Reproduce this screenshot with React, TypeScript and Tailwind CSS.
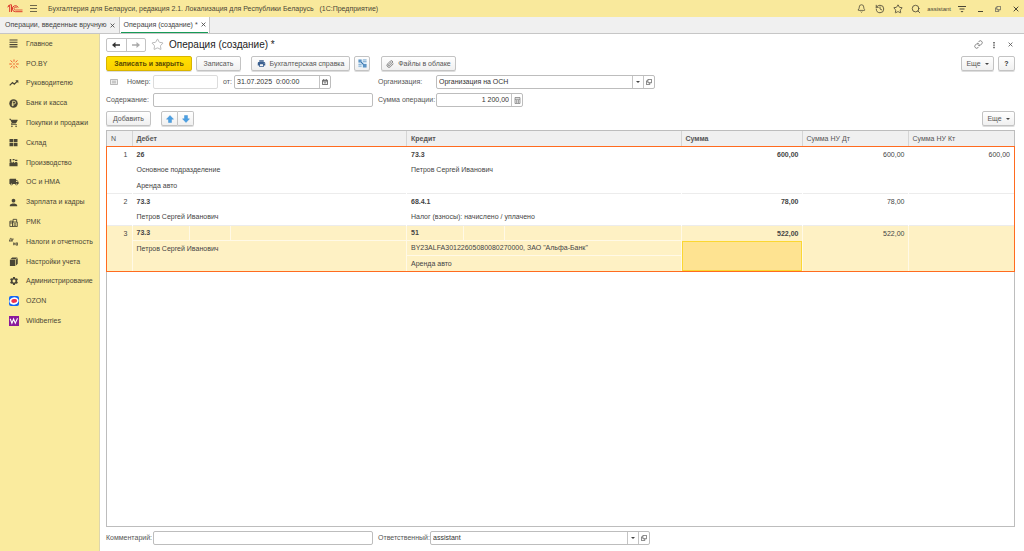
import type { ReactNode } from "react";
import clsx from "clsx";
import { Bell, History, Link, Paperclip, Search, Star } from "lucide-react";
import {
  MdLocalShipping,
  MdPerson,
  MdPrint,
  MdSettings,
  MdShoppingCart,
} from "react-icons/md";

const MenuIcon = () => (
  <svg viewBox="0 0 9 9" className="size-[9px]" stroke="currentColor" strokeWidth=".8">
    <path d="M1 1.500h7M1 4.500h7M1 7.500h7" />
  </svg>
);

const ListIcon = () => (
  <svg viewBox="0 0 9 9" className="size-[9px]" stroke="currentColor">
    <path d="M.5 1h8M.5 3.3h8M.5 5.6h8M.5 7.9h8" strokeWidth="1.1" />
  </svg>
);

const SparkIcon = () => (
  <svg viewBox="0 0 10 10" className="size-[10px]" stroke="#ee5a24" strokeWidth="1">
    <path d="M5 .5v2.200M5 7.300v2.200M1.500 1.500l2 1.700M8.500 1.500l-2 1.700M.3 5h2.500M7.200 5h2.500M1.500 8.500l2-1.700M8.500 8.500l-2-1.700" />
    <circle cx="5" cy="5" r=".8" fill="#ee5a24" stroke="none" />
  </svg>
);

const TrendIcon = () => (
  <svg viewBox="0 0 10 10" className="size-[10px]" fill="none" stroke="currentColor" strokeWidth="1.2">
    <path d="M.7 7.300L3.500 4.500l1.800 1.700L8.500 3" />
    <path d="M6.300 2.300h3v3z" fill="currentColor" stroke="none" />
  </svg>
);

const RubleIcon = () => (
  <svg viewBox="0 0 10 10" className="size-[9px]">
    <circle cx="5" cy="5" r="4.700" fill="currentColor" />
    <path
      d="M4 8V2.500h1.800a1.500 1.500 0 0 1 0 3H3M3 6.800h2.500"
      fill="none"
      stroke="#faeb9e"
      strokeWidth=".9"
    />
  </svg>
);

const WarehouseIcon = () => (
  <svg viewBox="0 0 9 9" className="size-[9px]" fill="currentColor">
    <path d="M.5 1h3.700v3.300H.5zM4.800 1h3.700v3.300H4.800zM.5 4.900h3.700v3.300H.5zM4.800 4.900h3.700v3.300H4.800z" />
  </svg>
);

const FactoryIcon = () => (
  <svg viewBox="0 0 10 10" className="size-[9px]" fill="currentColor">
    <path d="M.5 9.300V5.500L3 3.800v1.700l2.500-1.700v1.700L8 4.200l1.500 1v4.100zM.8 1h1.700v3L.8 5zM4 1.200h2.200v1.300H4zM6.700 2h2.600v1.200H6.700z" />
  </svg>
);

const CashDeskIcon = () => (
  <svg viewBox="0 0 10 10" className="size-[9px]" fill="none" stroke="currentColor">
    <path d="M1 3.500h3v6H1zM4 4.500h5.200v5H4zM4.500 4.500v-3h4v3M5.500 6.500h2.500M5.500 8h2.500M1 5.500h3" />
  </svg>
);

const TaxIcon = () => (
  <svg viewBox="0 0 10 10" className="size-[9px]" fill="none" stroke="currentColor" strokeWidth=".9">
    <path d="M.5 4.500l1-3h1v3M0 4.500h3.200M3.700 2v3M3.700 2.300h1.600M5.200 6v3.200M5.200 7.600h1.500M6.700 6.300v2.700M8 6.500h1.500v2.600H8z" />
  </svg>
);

const BoxIcon = () => (
  <svg viewBox="0 0 10 10" className="size-[9px]" fill="currentColor">
    <path d="M1 3h6v7H1zM1.500 2.500L3.500.500H9.500L7.500 2.500zM7.700 3L9.700 1v6.500L7.700 9.500z" />
  </svg>
);

const OzonIcon = () => (
  <svg viewBox="0 0 10 10" className="size-[10px]">
    <rect width="10" height="10" rx="2" fill="#1264f5" />
    <ellipse cx="5" cy="5" rx="4.600" ry="3.700" fill="#fff" transform="rotate(-15 5 5)" />
    <ellipse cx="5.200" cy="5" rx="2.900" ry="1.900" fill="#f0304f" transform="rotate(-10 5 5)" />
  </svg>
);

const WildberriesIcon = () => (
  <svg viewBox="0 0 10 10" className="size-[10px]">
    <rect width="10" height="10" fill="#8a1a9b" />
    <path d="M1.200 2.800l1.700 4.400 1.700-4.200 1.700 4.200 2.200-5" fill="none" stroke="#fff" strokeWidth="1.100" />
  </svg>
);

const Logo = () => (
  <svg viewBox="0 0 16 9" className="h-[9px] w-4" fill="none" stroke="#dc3a2c" strokeWidth="1">
    <path d="M.5 3L2.700 1.500V8M4.500 8V.8H3.200L1 2.200" />
    <path d="M11.200 3.700A3 3 0 1 0 8.500 7.700H15.500" />
    <path d="M9.800 4.200A1.400 1.400 0 1 0 8.500 6H15.500" strokeWidth=".8" />
  </svg>
);

const OpenIcon = () => (
  <svg viewBox="0 0 8 8" className="size-[6px]" fill="none" stroke="#555">
    <path d="M2.500.5h5v4.500h-5zM2.500 2.500h-2v5h4.500V5" />
  </svg>
);

const CaretIcon = () => (
  <svg viewBox="0 0 4 2" className="h-[2px] w-1" fill="#444">
    <path d="M0 0h4L2 2z" />
  </svg>
);

const CalendarIcon = () => (
  <svg viewBox="0 0 7 7" className="size-[6px]" fill="none" stroke="#444">
    <path d="M.5 1.500h6v5h-6zM1 2.500h5M2 0v1.500M5 0v1.500M2 4.500h3" strokeWidth=".9" />
  </svg>
);

const CalculatorIcon = () => (
  <svg viewBox="0 0 7 7" className="size-[7px]" fill="#eee" stroke="#777" strokeWidth=".7">
    <path d="M1 .5h5v6H1zM1 2.300h5M2.700 3v3M4.400 3v3" />
  </svg>
);

const PostingsIcon = () => (
  <svg viewBox="0 0 10 10" className="size-[9px]" fill="none">
    <path d="M.5.500h9v9h-9z" fill="#dcecf8" />
    <path d="M.5.500h3.500v3.500H.5zM5.500 5.500h4v4h-4z" fill="#5b93c4" />
    <path d="M5.500 1h4M5.500 3h4M.5 6h3.500M.5 8h3.500" stroke="#7ba7cc" />
    <path d="M3.500 3.500L6 6" stroke="#2f6da8" strokeWidth="1.2" />
  </svg>
);

const CloseIcon = ({ className }: { className?: string }) => (
  <svg viewBox="0 0 6 6" className={clsx("shrink-0", className)} stroke="currentColor">
    <path d="M.7.700l4.600 4.600M5.300.700L.7 5.300" />
  </svg>
);

const ArrowIcon = ({ className }: { className?: string }) => (
  <svg viewBox="0 0 8 8" className={clsx("size-[8px]", className)} fill="currentColor">
    <path d="M0 4L3.500 1v2.200H8v1.600H3.500V7z" />
  </svg>
);

const BlueArrowIcon = ({ className }: { className?: string }) => (
  <svg viewBox="0 0 8 8" className={clsx("size-[8px]", className)} fill="#4a9fe3" stroke="#2f85cc" strokeWidth=".4">
    <path d="M4 .500l3.500 3.700H5.500v3.300h-3V4.200H.500z" />
  </svg>
);

const sections: { title: string; icon: ReactNode }[] = [
  { title: "Главное", icon: <ListIcon /> },
  { title: "PO.BY", icon: <SparkIcon /> },
  { title: "Руководителю", icon: <TrendIcon /> },
  { title: "Банк и касса", icon: <RubleIcon /> },
  { title: "Покупки и продажи", icon: <MdShoppingCart size={10} /> },
  { title: "Склад", icon: <WarehouseIcon /> },
  { title: "Производство", icon: <FactoryIcon /> },
  { title: "ОС и НМА", icon: <MdLocalShipping size={10} /> },
  { title: "Зарплата и кадры", icon: <MdPerson size={11} /> },
  { title: "РМК", icon: <CashDeskIcon /> },
  { title: "Налоги и отчетность", icon: <TaxIcon /> },
  { title: "Настройки учета", icon: <BoxIcon /> },
  { title: "Администрирование", icon: <MdSettings size={10} /> },
  { title: "OZON", icon: <OzonIcon /> },
  { title: "Wildberries", icon: <WildberriesIcon /> },
];

const entries = [
  {
    debit: ["26", "Основное подразделение", "Аренда авто"],
    credit: ["73.3", "Петров Сергей Иванович"],
    sum: "600,00",
    taxDebit: "600,00",
    taxCredit: "600,00",
  },
  {
    debit: ["73.3", "Петров Сергей Иванович"],
    credit: ["68.4.1", "Налог (взносы): начислено / уплачено"],
    sum: "78,00",
    taxDebit: "78,00",
    taxCredit: "",
  },
  {
    debit: ["73.3", "Петров Сергей Иванович"],
    credit: ["51", 'BY23ALFA30122605080080270000, ЗАО "Альфа-Банк"', "Аренда авто"],
    sum: "522,00",
    taxDebit: "522,00",
    taxCredit: "",
  },
];

function Button({
  children,
  className,
  label,
}: {
  children: ReactNode;
  className?: string;
  label?: string;
}) {
  return (
    <button
      type="button"
      aria-label={label}
      className={clsx(
        "flex h-[15px] shrink-0 items-center justify-center rounded-[2px] border border-[#c3c3c3] bg-linear-to-b from-white to-[#f0f0f0] shadow-[0_1px_0_#ddd]",
        className
      )}
    >
      {children}
    </button>
  );
}

function Field({
  id,
  value = "",
  className,
  inputClassName,
  children,
}: {
  id: string;
  value?: string;
  className?: string;
  inputClassName?: string;
  children?: ReactNode;
}) {
  return (
    <div
      className={clsx(
        "flex h-[14px] shrink-0 overflow-hidden rounded-[2px] border border-[#bdbdbd] bg-white",
        className
      )}
    >
      <input
        id={id}
        defaultValue={value}
        className={clsx("min-w-0 flex-1 bg-transparent px-0.5 text-[#333] outline-none", inputClassName)}
      />
      {children}
    </div>
  );
}

function FieldButton({ label, children }: { label: string; children: ReactNode }) {
  return (
    <button
      type="button"
      aria-label={label}
      className="flex w-[11px] shrink-0 items-center justify-center border-l border-[#c4c4c4]"
    >
      {children}
    </button>
  );
}

function AccountCell({ lines, selected }: { lines: string[]; selected: boolean }) {
  return (
    <div>
      {lines.map((line, i) => (
        <div
          key={i}
          className={clsx(
            "flex items-center pl-1",
            i === 1 && !selected ? "h-4" : "h-[15px]",
            i === 0 && "font-bold",
            selected && i < lines.length - 1 && "border-b border-[#fff9e6]"
          )}
        >
          {selected && i === 0 ? (
            <>
              <span className="w-[52px]">{line}</span>
              <span className="h-full w-[42px] border-x border-[#fff9e6]" />
            </>
          ) : (
            line
          )}
        </div>
      ))}
    </div>
  );
}

function Header() {
  return (
    <header className="flex h-[17px] shrink-0 items-center bg-[#f9e99c] pr-[5px] pl-[7px] text-[#4a4636]">
      <Logo />
      <button type="button" aria-label="Меню" className="ml-[6px]">
        <MenuIcon />
      </button>
      <span className="ml-[10px] whitespace-pre">
        {"Бухгалтерия для Беларуси, редакция 2.1. Локализация для Республики Беларусь   (1С:Предприятие)"}
      </span>
      <div className="ml-auto flex items-center">
        <button type="button" aria-label="Уведомления">
          <Bell size={9} />
        </button>
        <button type="button" aria-label="История" className="ml-[9px]">
          <History size={10} />
        </button>
        <button type="button" aria-label="Избранное" className="ml-2">
          <Star size={10} />
        </button>
        <button type="button" aria-label="Поиск" className="ml-2">
          <Search size={10} />
        </button>
        <span className="ml-[6px] text-[6px]">assistant</span>
        <button type="button" aria-label="Настройки" className="ml-[7px]">
          <svg viewBox="0 0 8 8" className="size-[8px]" stroke="currentColor">
            <path d="M0 1.500h8M1.500 4h5" />
            <path d="M2.500 6h3L4 7.500z" fill="currentColor" stroke="none" />
          </svg>
        </button>
        <button type="button" aria-label="Свернуть" className="ml-[12px]">
          <svg viewBox="0 0 5 8" className="h-[8px] w-[5px]" stroke="currentColor">
            <path d="M0 6.500h5" />
          </svg>
        </button>
        <button type="button" aria-label="Развернуть" className="ml-[12px]">
          <OpenIcon />
        </button>
        <button type="button" aria-label="Закрыть" className="ml-[12px]">
          <CloseIcon className="size-[6px]" />
        </button>
      </div>
    </header>
  );
}

function Tabs() {
  return (
    <nav className="flex h-[17px] shrink-0 border-b border-[#c6c6c6] bg-[#f0f0f0] text-[#444]">
      <div className="flex items-center gap-[3px] border-r border-[#c6c6c6] pr-[4px] pl-[5px]">
        <a href="#operations">Операции, введенные вручную</a>
        <button type="button" aria-label="Закрыть вкладку">
          <CloseIcon className="size-[5px]" />
        </button>
      </div>
      <div className="flex border-r border-[#c6c6c6] bg-white px-px">
        <div className="flex items-center gap-[3px] border-b border-[#169b57] pr-[2px] pl-[3px]">
          <a href="#operation">Операция (создание) *</a>
          <button type="button" aria-label="Закрыть вкладку">
            <CloseIcon className="size-[5px]" />
          </button>
        </div>
      </div>
    </nav>
  );
}

function Sidebar() {
  return (
    <aside className="w-[100px] shrink-0 border-r border-[#ddd6ad] bg-[#faeb9e] text-[#4a4636]">
      <ul className="flex h-[297px] flex-col">
        {sections.map(({ title, icon }) => (
          <li key={title} className="flex flex-1 items-center">
            <a href="#section" className="flex items-center whitespace-nowrap">
              <span className="ml-2 flex w-[11px] justify-center">{icon}</span>
              <span className="ml-[7px]">{title}</span>
            </a>
          </li>
        ))}
      </ul>
    </aside>
  );
}

function EntriesTable() {
  return (
    <div className="mt-1 min-h-0 flex-1 border border-[#bdbdbd]">
      <table className="w-full table-fixed border-collapse text-left text-[#444]">
        <colgroup>
          <col className="w-[25px]" />
          <col />
          <col />
          <col className="w-[121px]" />
          <col className="w-[106px]" />
          <col className="w-[106px]" />
        </colgroup>
        <thead>
          <tr className="h-4 bg-[#f0f0f0] text-[#555] *:border-r *:border-[#d5d5d5] *:py-0 *:pl-1">
            <th className="font-normal">N</th>
            <th>Дебет</th>
            <th>Кредит</th>
            <th>Сумма</th>
            <th className="font-normal">Сумма НУ Дт</th>
            <th className="border-r-0! font-normal">Сумма НУ Кт</th>
          </tr>
        </thead>
        <tbody className="outline-1 outline-[#ff6b1f]">
          {entries.map((entry, i) => {
            const selected = i === 2;
            return (
              <tr
                key={i}
                className={clsx(
                  "align-top *:border-r *:p-0 *:last:border-r-0",
                  selected
                    ? "bg-[#fef1c4] *:border-r-[#fff9e6]"
                    : "border-b border-[#ececec] *:border-r-transparent"
                )}
              >
                <td>
                  <div className="flex h-[15px] items-center justify-end pr-1">{i + 1}</div>
                </td>
                <td>
                  <AccountCell lines={entry.debit} selected={selected} />
                </td>
                <td>
                  <AccountCell lines={entry.credit} selected={selected} />
                </td>
                <td>
                  <div className="flex h-[15px] items-center justify-end pr-[3px] font-bold">
                    {entry.sum}
                  </div>
                  {selected && <div className="h-[30px] border border-[#fbd732] bg-[#fee391]" />}
                </td>
                <td>
                  <div className="flex h-[15px] items-center justify-end pr-[3px]">{entry.taxDebit}</div>
                </td>
                <td>
                  <div className="flex h-[15px] items-center justify-end pr-1">{entry.taxCredit}</div>
                </td>
              </tr>
            );
          })}
        </tbody>
      </table>
    </div>
  );
}

export default function App() {
  return (
    <div className="flex h-screen flex-col overflow-hidden bg-white font-['Liberation_Sans',Arial,sans-serif] text-[7px] leading-[10px]">
      <Header />
      <Tabs />
      <div className="flex min-h-0 flex-1">
        <Sidebar />
        <main className="flex min-w-0 flex-1 flex-col pt-[3px] pr-[9px] pb-[6px] pl-[6px] text-[#555]">
          <div className="flex h-[15px] items-center">
            <div className="flex h-[14px] w-10 divide-x divide-[#c3c3c3] rounded-[2px] border border-[#c3c3c3]">
              <button type="button" aria-label="Назад" className="flex flex-1 items-center justify-center">
                <ArrowIcon className="text-[#333]" />
              </button>
              <button type="button" aria-label="Вперед" className="flex flex-1 items-center justify-center">
                <ArrowIcon className="rotate-180 text-[#aaa]" />
              </button>
            </div>
            <button type="button" aria-label="В избранное" className="ml-[5px] text-[#aaa]">
              <Star size={13} strokeWidth={1.5} />
            </button>
            <h1 className="ml-[5px] text-[10px] text-[#222]">Операция (создание) *</h1>
            <div className="ml-auto flex items-center">
              <button type="button" aria-label="Ссылка">
                <Link size={9} strokeWidth={1.8} />
              </button>
              <button type="button" aria-label="Меню формы" className="ml-[10px]">
                <svg viewBox="0 0 2 8" className="h-[8px] w-[2px]" fill="#444">
                  <path d="M.3 1h1.400v1.400H.3zM.3 3.400h1.400v1.400H.3zM.3 5.800h1.400v1.400H.3z" />
                </svg>
              </button>
              <button type="button" aria-label="Закрыть форму" className="mr-[2px] ml-[13px]">
                <CloseIcon className="size-[5px]" />
              </button>
            </div>
          </div>

          <div className="mt-1 flex items-center">
            <Button className="w-[86px] border-[#d8b400]! from-[#ffe100]! to-[#fbd000]! font-bold text-[#5a4a00]">
              Записать и закрыть
            </Button>
            <Button className="ml-1 w-[45px]">Записать</Button>
            <Button className="ml-[10px] w-[99px] gap-1">
              <MdPrint size={9} className="text-[#3a5f8f]" />
              Бухгалтерская справка
            </Button>
            <Button className="ml-1 w-4" label="Показать проводки">
              <PostingsIcon />
            </Button>
            <Button className="ml-[11px] w-[75px] gap-1">
              <Paperclip size={8} />
              Файлы в облаке
            </Button>
            <Button className="ml-auto w-[33px] gap-1">
              Еще <CaretIcon />
            </Button>
            <Button className="ml-1 w-[17px] font-bold text-[#333]" label="Справка">
              ?
            </Button>
          </div>

          <div className="mt-1 flex items-center">
            <svg viewBox="0 0 8 6" className="ml-1 h-[6px] w-2" fill="#eee" stroke="#aaa">
              <path d="M.5.500h7v5h-7zM2 2.200h4M2 3.800h4" strokeWidth=".8" />
            </svg>
            <label htmlFor="number" className="ml-[9px] w-[26px]">
              Номер:
            </label>
            <Field id="number" className="w-[65px] border-[#dcdcdc]!" />
            <label htmlFor="date" className="ml-[5px] w-[11px]">
              от:
            </label>
            <Field id="date" value="31.07.2025  0:00:00" className="w-[97px]" inputClassName="whitespace-pre">
              <FieldButton label="Выбрать дату">
                <CalendarIcon />
              </FieldButton>
            </Field>
            <label htmlFor="organization" className="ml-[47px] w-[58px]">
              Организация:
            </label>
            <Field id="organization" value="Организация на ОСН" className="w-[219px]">
              <FieldButton label="Выбрать организацию">
                <CaretIcon />
              </FieldButton>
              <FieldButton label="Открыть организацию">
                <OpenIcon />
              </FieldButton>
            </Field>
          </div>

          <div className="mt-1 flex items-center">
            <label htmlFor="content" className="w-[47px]">
              Содержание:
            </label>
            <Field id="content" className="w-[220px]" />
            <label htmlFor="amount" className="ml-[5px] w-[58px]">
              Сумма операции:
            </label>
            <Field id="amount" value="1 200,00" className="w-[87px]" inputClassName="text-right">
              <FieldButton label="Калькулятор">
                <CalculatorIcon />
              </FieldButton>
            </Field>
          </div>

          <div className="mt-1 flex items-center">
            <Button className="w-[45px]">Добавить</Button>
            <div className="ml-[10px] flex">
              <Button className="w-[17px] rounded-r-none" label="Вверх">
                <BlueArrowIcon />
              </Button>
              <Button className="w-4 rounded-l-none border-l-0" label="Вниз">
                <BlueArrowIcon className="rotate-180" />
              </Button>
            </div>
            <Button className="ml-auto w-[33px] gap-1">
              Еще <CaretIcon />
            </Button>
          </div>

          <EntriesTable />

          <div className="mt-1 flex items-center">
            <label htmlFor="comment" className="w-[47px]">
              Комментарий:
            </label>
            <Field id="comment" className="w-[220px]" />
            <label htmlFor="responsible" className="ml-[5px] w-[52px]">
              Ответственный:
            </label>
            <Field id="responsible" value="assistant" className="w-[220px]">
              <FieldButton label="Выбрать ответственного">
                <CaretIcon />
              </FieldButton>
              <FieldButton label="Открыть ответственного">
                <OpenIcon />
              </FieldButton>
            </Field>
          </div>
        </main>
      </div>
    </div>
  );
}
